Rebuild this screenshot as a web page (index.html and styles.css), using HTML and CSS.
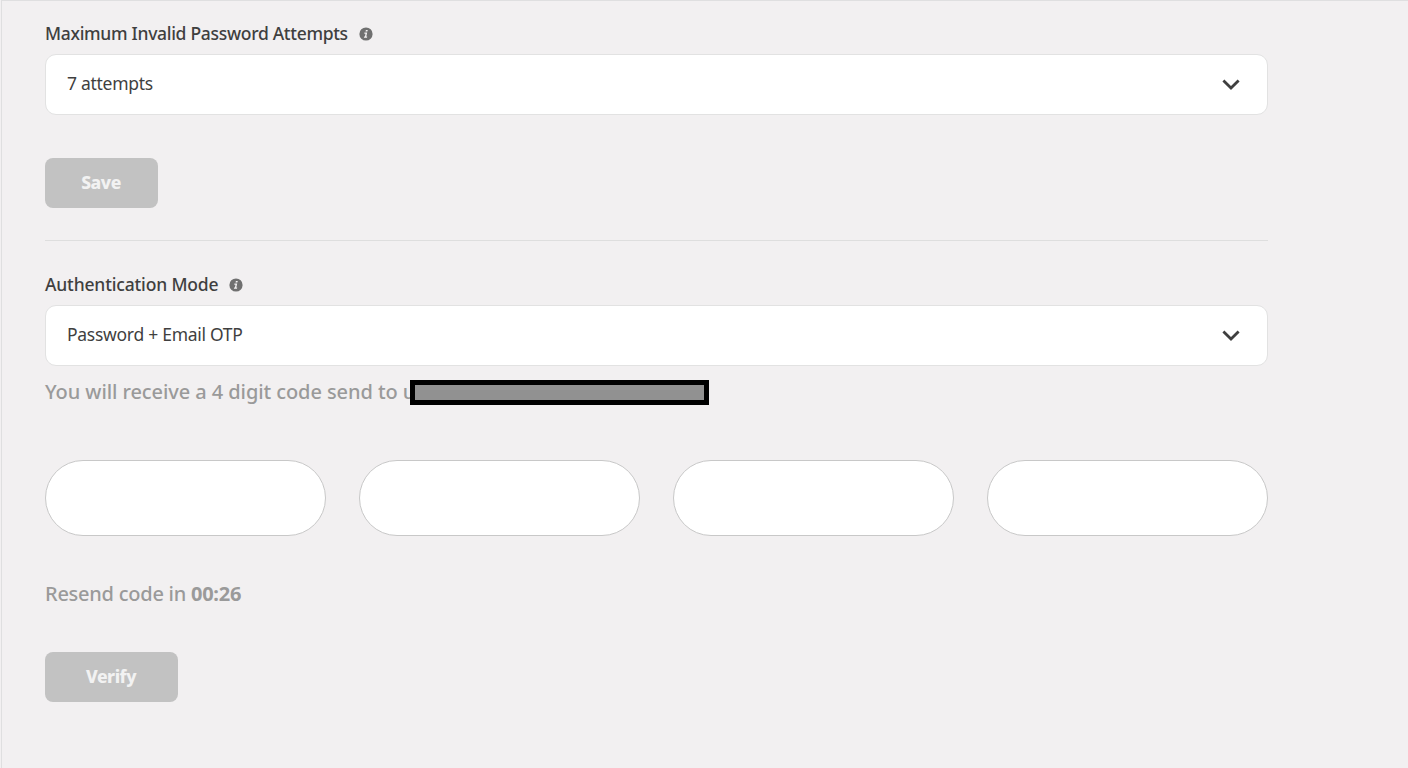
FILE: index.html
```html
<!DOCTYPE html>
<html lang="en">
<head>
    <meta charset="UTF-8">
    <title>Security settings</title>
    <link rel="stylesheet" href="styles.css">
</head>
<body>
<main class="settings">
    <section class="group">
        <div class="label">
            <span class="attempts-label">Maximum Invalid Password Attempts</span>
            <svg class="info" viewBox="0 0 14 14"><circle cx="7" cy="7" r="6.6"/><path d="M6.9 2.9h1.9l-.4 1.7H6.5zM5.4 5.6h2.8l-.9 3.9h.9l-.2 1.2H4.9l.2-1.2h.8l.6-2.7h-1.2z"/></svg>
        </div>
        <div class="select">
            <span class="value">7 attempts</span>
            <svg class="arrow" viewBox="0 0 18 12"><path d="M1.4 1.6 9 9.1l7.6-7.5"/></svg>
        </div>
        <button class="btn save" disabled>Save</button>
    </section>
    <section class="group auth">
        <div class="label">
            <span class="mode-label">Authentication Mode</span>
            <svg class="info" viewBox="0 0 14 14"><circle cx="7" cy="7" r="6.6"/><path d="M6.9 2.9h1.9l-.4 1.7H6.5zM5.4 5.6h2.8l-.9 3.9h.9l-.2 1.2H4.9l.2-1.2h.8l.6-2.7h-1.2z"/></svg>
        </div>
        <div class="select">
            <span class="value">Password + Email OTP</span>
            <svg class="arrow" viewBox="0 0 18 12"><path d="M1.4 1.6 9 9.1l7.6-7.5"/></svg>
        </div>
        <p class="hint"><span class="hint-text">You will receive a 4 digit code send to u</span><span class="redacted"></span></p>
        <div class="code">
            <input type="text" maxlength="1" class="digit">
            <input type="text" maxlength="1" class="digit">
            <input type="text" maxlength="1" class="digit">
            <input type="text" maxlength="1" class="digit">
        </div>
        <p class="resend">Resend code in <b>00:26</b></p>
        <button class="btn verify" disabled>Verify</button>
    </section>
</main>
</body>
</html>
```
FILE: styles.css
```css
* {
    box-sizing: border-box;
}

body {
    margin: 0;

    font-family: "Noto Sans", "Open Sans", sans-serif;
    color: #3f3f3f;
    background-color: #f2f0f1;
}

.settings {
    min-height: 768px;
    padding: 18px 140px 0 43px;
    margin-left: 1px;

    border-top: 1px solid #dfdfe0;
    border-left: 1px solid #dfdfe0;
}

.group {
    display: flex;
    flex-direction: column;
    align-items: flex-start;

    width: 1223px;
}

.auth {
    margin-top: 32px;
    padding-top: 29px;

    border-top: 1px solid #dedede;
}

.label {
    display: flex;
    align-items: center;
    gap: 11px;

    height: 28px;
    margin-bottom: 7px;

    font-size: 17.5px;
    font-weight: 500;
    line-height: 28px;
    white-space: nowrap;
}

.attempts-label {
    width: 303px;

    letter-spacing: -.3px;
}

.mode-label {
    width: 173px;

    letter-spacing: -.16px;
}

.info {
    width: 14px;
    height: 14px;
    margin-top: 1px;
}

.info circle {
    fill: #707070;
}

.info path {
    fill: #f2f0f1;
}

.select {
    display: flex;
    align-items: center;
    justify-content: space-between;

    width: 100%;
    height: 61px;
    padding: 0 27px 0 21px;

    border: 1px solid #e2e2e2;
    border-radius: 11px;
    background-color: #fff;
}

.value {
    padding-bottom: 3px;

    font-size: 17.5px;
    line-height: 28px;

    letter-spacing: -.28px;
}

.arrow {
    width: 18px;
    height: 12px;
}

.arrow path {
    fill: none;
    stroke: #3f3f3f;
    stroke-width: 2.8;
}

.btn {
    height: 50px;
    padding: 0 1px 2px 0;

    font-family: inherit;
    font-size: 17.5px;
    font-weight: 800;

    letter-spacing: -.45px;

    color: #f2f2f2;
    border: none;
    border-radius: 8px;
    background-color: #c2c2c2;
}

.save {
    width: 113px;
    margin-top: 43px;
}

.hint,
.resend {
    display: flex;
    align-items: center;

    height: 30px;
    margin: 11px 0 0;

    font-size: 20px;
    font-weight: 500;
    line-height: 30px;
    white-space: pre;

    letter-spacing: -.08px;

    color: #9a9a9a;
}

.hint-text {
    width: 365px;
}

/* bar sits over the end of the address */
.redacted {
    position: relative;

    width: 299px;
    height: 25px;

    border: 5px solid #000;
    background-color: #919191;
}

.code {
    display: grid;
    grid-template-columns: repeat(4, 1fr);
    gap: 33px;

    width: 100%;
    margin-top: 53px;
}

.digit {
    width: 100%;
    height: 76px;

    border: 1px solid #c8c8c8;
    border-radius: 38px;
    outline: none;
    background-color: #fff;
}

.resend {
    margin-top: 43px;

    letter-spacing: -.25px;
}

.verify {
    width: 133px;
    margin-top: 43px;
}
```
